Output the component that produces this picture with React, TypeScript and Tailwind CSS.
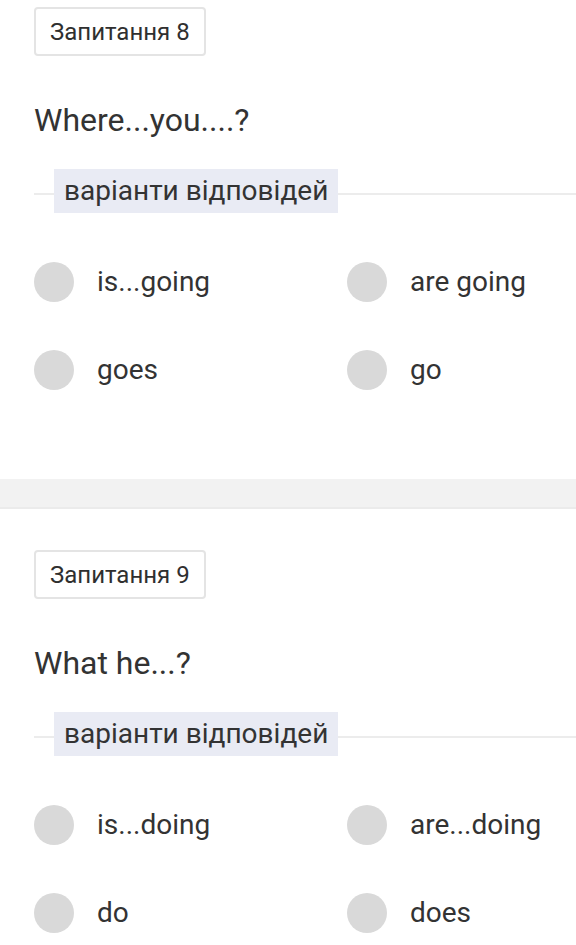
import React from "react";

type Q = { n: number; text: string; options: string[] };

const questions: Q[] = [
  { n: 8, text: "Where...you....?", options: ["is...going", "are going", "goes", "go"] },
  { n: 9, text: "What he...?", options: ["is...doing", "are...doing", "do", "does"] },
];

function Section({ q, first }: { q: Q; first: boolean }) {
  return (
    <section className={`px-[34px] ${first ? "pt-[7px] pb-[89px]" : "pt-[41px] pb-[40px]"}`}>
      <div className="inline-flex h-[49px] items-center rounded-[4px] border-2 border-[#e4e4e4] px-[14px] text-[24px] text-[#2f2f2f]">
        Запитання {q.n}
      </div>
      <div className="mt-[46px] h-[36px] text-[32px] leading-[36px] text-[#333333]">{q.text}</div>
      <div className="mt-[31px] flex h-[44px] items-center -mr-[34px]">
        <div className="mt-[5px] h-[2px] w-[20px] bg-[#ececec]" />
        <div className="flex h-[44px] items-center bg-[#e9ebf4] px-[10px] text-[28px] text-[#333333]">
          варіанти відповідей
        </div>
        <div className="mt-[5px] h-[2px] flex-1 bg-[#ececec]" />
      </div>
      <div className="mt-[49px] grid grid-cols-[313px_1fr] gap-y-[48px]">
        {q.options.map((o) => (
          <div key={o} className="flex h-[40px] items-center">
            <div className="h-[40px] w-[40px] shrink-0 rounded-full bg-[#d9d9d9]" />
            <span className="ml-[23px] text-[28px] text-[#333333]">{o}</span>
          </div>
        ))}
      </div>
    </section>
  );
}

export default function App() {
  return (
    <div className="min-h-[945px] bg-white" style={{ fontFamily: "Roboto, 'Noto Sans', sans-serif" }}>
      <Section q={questions[0]} first />
      <div className="h-[30px] border-b-2 border-[#ebebeb] bg-[#f2f2f2]" />
      <Section q={questions[1]} first={false} />
    </div>
  );
}
